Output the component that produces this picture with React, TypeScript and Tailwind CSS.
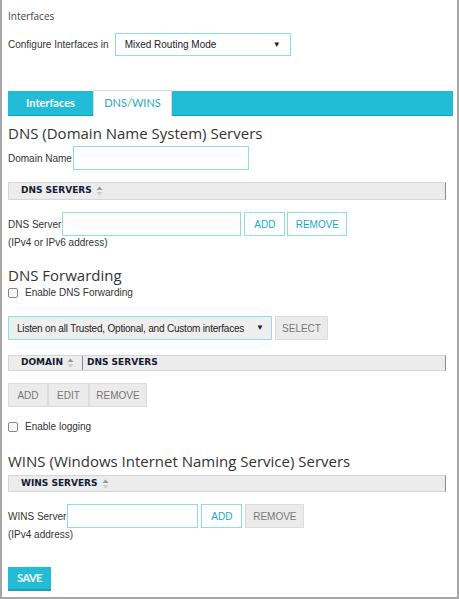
export default function App() {
  const label = "text-[10px] leading-[13px] text-[#333] whitespace-nowrap";
  const heading = "text-[15px] text-[#333] leading-[15px] whitespace-nowrap";
  const cyanBorder = "border border-[#8fdbe6]";
  const headFont = { fontFamily: '"Open Sans", sans-serif' };
  const gridFont = { fontFamily: '"DejaVu Sans", Verdana, sans-serif' };

  const SortIcon = () => (
    <svg width="7" height="10" viewBox="0 0 7 10" className="ml-1 inline-block">
      <path d="M3.5 0.5 L6.5 4 L0.5 4 Z" fill="#999" />
      <path d="M3.5 9.5 L6.5 6 L0.5 6 Z" fill="#ccc" />
    </svg>
  );

  const Check = () => (
    <span className="inline-block h-[10px] w-[10px] rounded-[2px] border border-[#888] bg-[#f6f6f6]" />
  );

  return (
    <div
      className="h-[599px] w-[459px] overflow-hidden border-x-2 border-b-2 border-[#a6a6a6] bg-white"
      style={{ fontFamily: '"Liberation Sans", Arial, sans-serif' }}
    >
      <div className="px-[6px]">
        <div className="pt-[9px] text-[10px] leading-[15px] text-[#444]" style={headFont}>
          Interfaces
        </div>

        <div className="mt-[9px] flex items-center">
          <span className={label}>Configure Interfaces in</span>
          <div className={`ml-[6px] flex h-[23px] w-[176px] items-center justify-between px-[9px] ${cyanBorder} text-[10px] text-[#222]`}>
            <span>Mixed Routing Mode</span>
            <span className="text-[8px]">▼</span>
          </div>
        </div>

        {/* Tabs */}
        <div className="mt-[35px] flex h-[25px] w-[445px] items-end border-b border-[#0fa5c0] bg-[#22bcd6]" style={{ fontFamily: 'Lato, sans-serif' }}>
          <div className="flex h-[24px] w-[85px] items-center justify-center text-[11px] font-bold text-white">
            Interfaces
          </div>
          <div className="-mb-px flex h-[26px] w-[79px] items-center justify-center border-x border-t border-[#d8d8d8] bg-white text-[11px] text-[#29a9c4]">
            DNS/WINS
          </div>
        </div>

        {/* DNS section */}
        <h2 className={`mt-[10px] ${heading}`} style={headFont}>
          DNS (Domain Name System) Servers
        </h2>
        <div className="mt-[5px] flex items-center">
          <span className={label}>Domain Name</span>
          <div className={`ml-[1px] h-[24px] w-[176px] ${cyanBorder}`} />
        </div>

        <div className="mt-[12px] flex h-[18px] w-[438px] items-center border border-[#d6d6d6] border-r-[#888] bg-[#ececec] pl-[12px]">
          <span className="text-[9px] font-bold text-[#141a33]" style={gridFont}>
            DNS SERVERS
          </span>
          <SortIcon />
        </div>

        <div className="mt-[12px] flex items-center">
          <span className={label}>DNS Server</span>
          <div className={`ml-[1px] h-[24px] w-[179px] ${cyanBorder}`} />
          <div className={`ml-[3px] flex h-[24px] w-[41px] items-center justify-center ${cyanBorder} text-[10px] text-[#1aa7c4]`}>ADD</div>
          <div className={`ml-[2px] flex h-[24px] w-[60px] items-center justify-center ${cyanBorder} text-[10px] text-[#1aa7c4]`}>REMOVE</div>
        </div>
        <div className={label}>(IPv4 or IPv6 address)</div>

        {/* DNS Forwarding */}
        <h2 className={`mt-[19px] ${heading}`} style={headFont}>
          DNS Forwarding
        </h2>
        <div className="mt-[3px] flex items-center gap-[7px]">
          <Check />
          <span className={label}>Enable DNS Forwarding</span>
        </div>

        <div className="mt-[17px] flex items-center">
          <div className={`flex h-[24px] w-[264px] items-center justify-between bg-[#eeeeee] pl-[8px] pr-[7px] ${cyanBorder} text-[10px] text-[#222]`}>
            <span className="whitespace-nowrap tracking-[-0.2px]">Listen on all Trusted, Optional, and Custom interfaces</span>
            <span className="text-[8px]">▼</span>
          </div>
          <div className="ml-[3px] flex h-[24px] w-[53px] items-center justify-center border border-[#dcdcdc] bg-[#ebebeb] text-[10px] text-[#777]">
            SELECT
          </div>
        </div>

        <div className="mt-[15px] flex h-[16px] w-[438px] items-center border border-[#d6d6d6] border-r-[#888] bg-[#ececec]" style={gridFont}>
          <div className="flex h-full w-[74px] items-center border-r border-[#888] pl-[12px]">
            <span className="text-[9px] font-bold text-[#141a33]">DOMAIN</span>
            <SortIcon />
          </div>
          <span className="pl-[4px] text-[9px] font-bold text-[#141a33]">DNS SERVERS</span>
        </div>

        <div className="mt-[12px] flex">
          {["ADD", "EDIT", "REMOVE"].map((t, i) => (
            <div
              key={t}
              className={`flex h-[24px] items-center justify-center border border-[#dcdcdc] bg-[#ebebeb] text-[10px] text-[#777] ${i === 0 ? "w-[40px]" : i === 1 ? "w-[41px]" : "w-[58px]"}`}
            >
              {t}
            </div>
          ))}
        </div>

        <div className="mt-[13px] flex items-center gap-[7px]">
          <Check />
          <span className={label}>Enable logging</span>
        </div>

        {/* WINS */}
        <h2 className={`mt-[21px] ${heading}`} style={headFont}>
          WINS (Windows Internet Naming Service) Servers
        </h2>
        <div className="mt-[6px] flex h-[17px] w-[438px] items-center border border-[#d6d6d6] border-r-[#888] bg-[#ececec] pl-[12px]">
          <span className="text-[9px] font-bold text-[#141a33]" style={gridFont}>
            WINS SERVERS
          </span>
          <SortIcon />
        </div>

        <div className="mt-[12px] flex items-center">
          <span className={label}>WINS Server</span>
          <div className={`ml-[1px] h-[24px] w-[131px] ${cyanBorder}`} />
          <div className={`ml-[3px] flex h-[24px] w-[41px] items-center justify-center ${cyanBorder} text-[10px] text-[#1aa7c4]`}>ADD</div>
          <div className="ml-[3px] flex h-[24px] w-[59px] items-center justify-center border border-[#dcdcdc] bg-[#ebebeb] text-[10px] text-[#777]">REMOVE</div>
        </div>
        <div className={label}>(IPv4 address)</div>

        <div
          className="mt-[26px] flex h-[24px] w-[43px] items-center justify-center border-b-2 border-[#1a9fb8] bg-[#22bcd6] text-[11px] font-bold tracking-[-0.5px] text-white"
          style={{ fontFamily: 'Lato, sans-serif' }}
        >
          SAVE
        </div>
      </div>
    </div>
  );
}
